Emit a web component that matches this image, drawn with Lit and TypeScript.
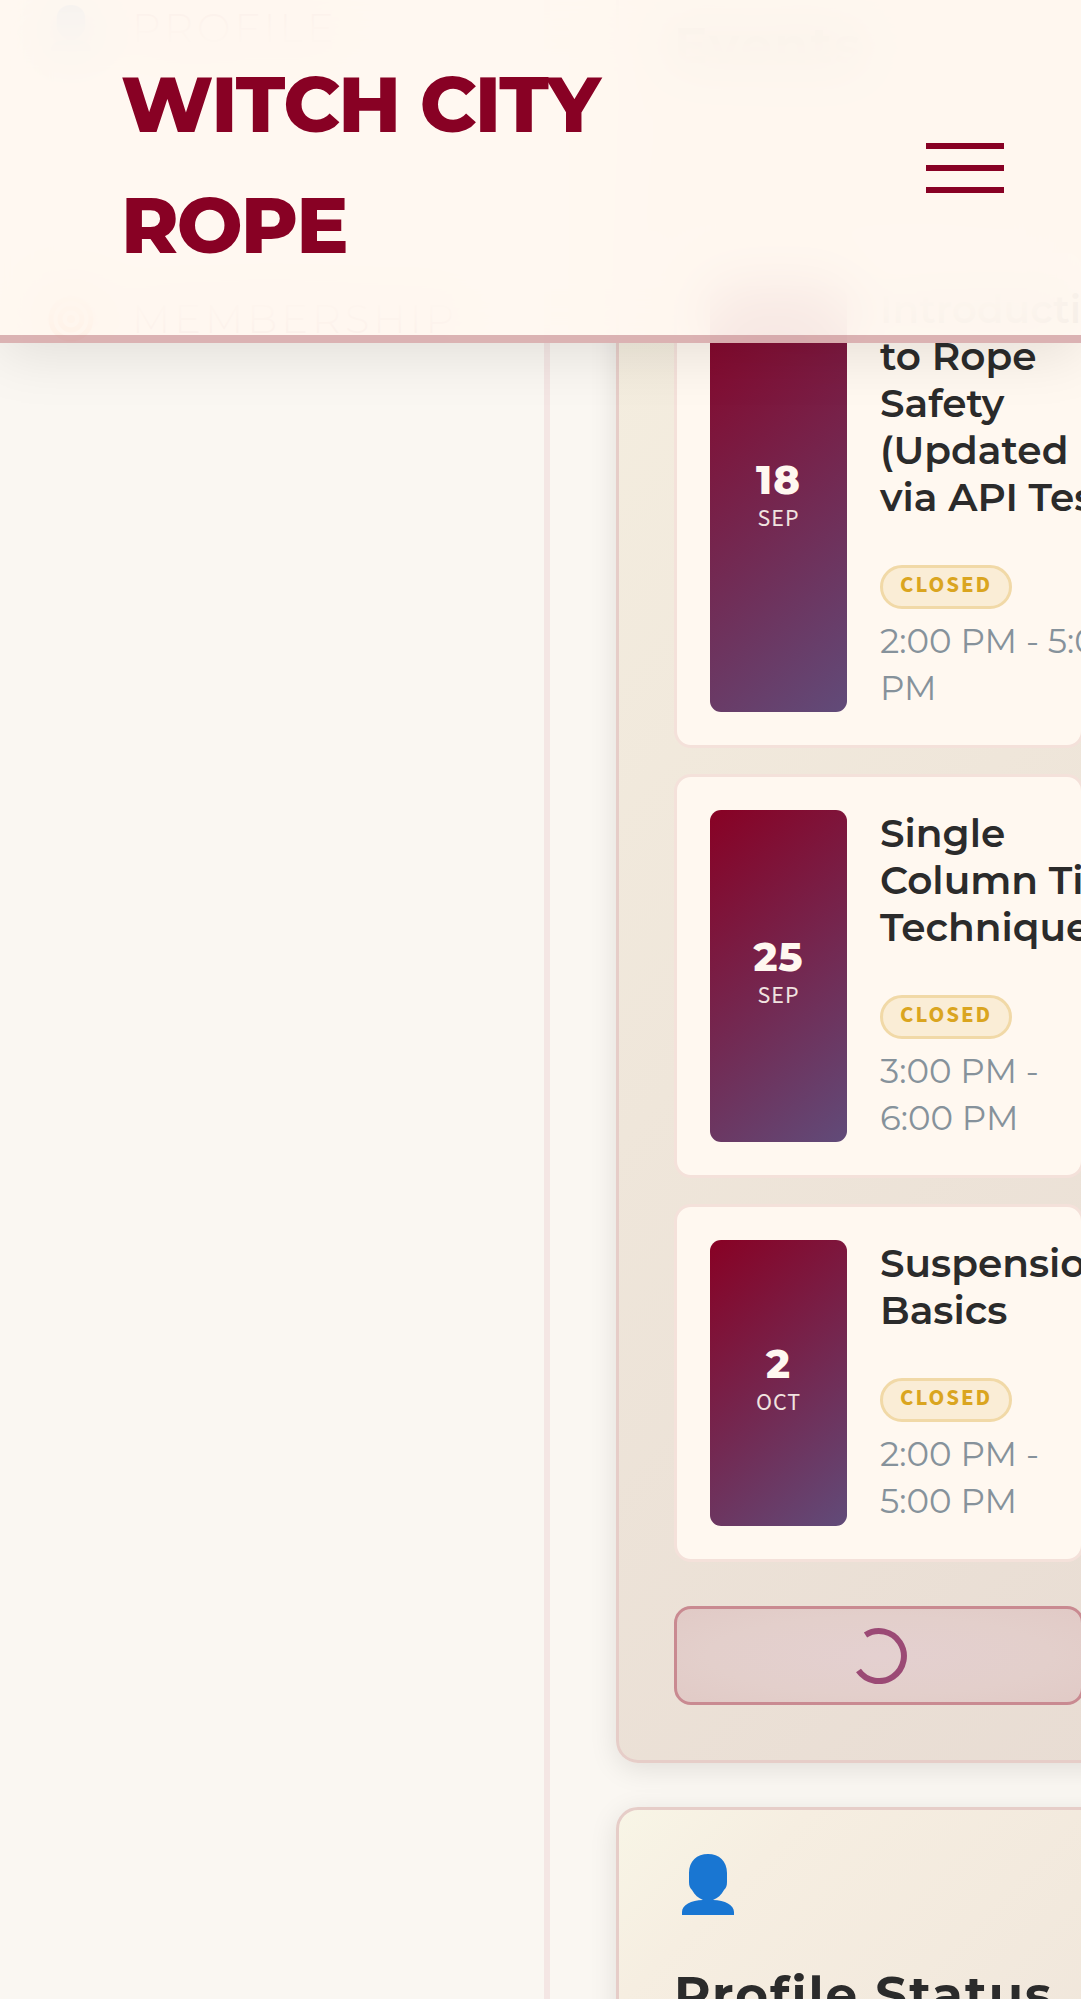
import { LitElement, html, css, svg } from "lit";
import { customElement, property } from "lit/decorators.js";

interface EventItem {
  day: string;
  month: string;
  title: string[];
  time: string[];
}

const EVENTS: EventItem[] = [
  {
    day: "18",
    month: "SEP",
    title: ["Introduction", "to Rope", "Safety", "(Updated", "via API Test)"],
    time: ["2:00 PM - 5:00", "PM"],
  },
  {
    day: "25",
    month: "SEP",
    title: ["Single", "Column Tie", "Techniques"],
    time: ["3:00 PM -", "6:00 PM"],
  },
  {
    day: "2",
    month: "OCT",
    title: ["Suspension", "Basics"],
    time: ["2:00 PM -", "5:00 PM"],
  },
];

const person = html`<svg class="person" viewBox="0 0 52 61" aria-hidden="true">
  ${svg`<path fill="#1976d2" d="M26 0C37 0 45 7 45 19V28C45 32 44 34 42 36C39 41 36 44 31 46C43 46 52 51 52 58V61H0V58C0 51 9 46 21 46C16 44 13 41 10 36C8 34 7 32 7 28V19C7 7 15 0 26 0Z"/>`}
</svg>`;

const target = html`<svg class="target" viewBox="0 0 46 46" aria-hidden="true">
  ${svg`<g fill="none" stroke="#e8590c" stroke-width="5"><circle cx="23" cy="23" r="20"/><circle cx="23" cy="23" r="11"/></g><circle cx="23" cy="23" r="4" fill="#e8590c"/>`}
</svg>`;

const lines = (items: string[]) =>
  items.map((text, i) => (i ? html`<br />${text}` : text));

@customElement("event-card")
export class EventCard extends LitElement {
  @property({ attribute: false }) event!: EventItem;

  static styles = css`
    :host {
      display: block;
    }
    .event {
      display: flex;
      gap: 33px;
      padding: 33px;
      border: 3px solid #f4e1da;
      border-radius: 17px;
      background: #fff8f0;
    }
    .date {
      flex: none;
      box-sizing: border-box;
      width: 137px;
      min-height: 286px;
      display: flex;
      flex-direction: column;
      align-items: center;
      justify-content: center;
      border-radius: 11px;
      background: linear-gradient(140deg, #880124, #614b79);
      color: #fff8f0;
    }
    .day {
      font: 800 40px/40px "Montserrat", "Inter", sans-serif;
      letter-spacing: 1px;
    }
    .month {
      font: 400 24px/38px "Source Sans 3", "Noto Sans CJK SC", sans-serif;
      letter-spacing: 1px;
      opacity: 0.9;
    }
    .info {
      width: 135px;
      white-space: nowrap;
    }
    .title {
      margin: 0 0 44px;
      font: 600 39px/47px "Montserrat", "Inter", sans-serif;
      color: #2b2b2b;
    }
    .badge {
      display: flex;
      align-items: center;
      box-sizing: border-box;
      width: max-content;
      height: 44px;
      margin-bottom: 9px;
      padding: 0 17px 4px;
      border: 3px solid #f1d9a7;
      border-radius: 22px;
      background: #faedd6;
      color: #daa520;
      font: 700 23px/36px "Source Sans 3", "Noto Sans CJK SC", sans-serif;
      letter-spacing: 2px;
    }
    .time {
      margin: 0;
      font: 400 34px/47px "Montserrat", "Inter", sans-serif;
      color: #86929b;
    }
  `;

  render() {
    const e = this.event;
    return html`<article class="event">
      <div class="date">
        <span class="day">${e.day}</span>
        <span class="month">${e.month}</span>
      </div>
      <div class="info">
        <h3 class="title">${lines(e.title)}</h3>
        <span class="badge">CLOSED</span>
        <p class="time">${lines(e.time)}</p>
      </div>
    </article>`;
  }
}

@customElement("app-root")
export class AppRoot extends LitElement {
  static styles = css`
    :host {
      display: block;
      height: 100vh;
      overflow: hidden;
      background: #faf7f2;
    }
    .header {
      position: fixed;
      inset: 0 0 auto 0;
      z-index: 2;
      display: flex;
      align-items: center;
      justify-content: space-between;
      padding: 44px 77px 57px 121px;
      box-shadow: 0 11px 55px rgba(0, 0, 0, 0.1);
    }
    .header::before {
      content: "";
      position: absolute;
      inset: 0;
      z-index: -1;
      background: rgba(255, 248, 240, 0.95);
      backdrop-filter: blur(28px);
      opacity: 0.99;
    }
    .header::after {
      content: "";
      position: absolute;
      inset: auto 0 0 0;
      height: 8px;
      background: rgba(183, 109, 117, 0.5);
    }
    .logo {
      max-width: 500px;
      font: 800 78px/121px "Montserrat", "Inter", sans-serif;
      font-kerning: none;
      letter-spacing: -2px;
      color: #880124;
      text-decoration: none;
    }
    .menu {
      display: flex;
      flex-direction: column;
      gap: 16px;
      width: 78px;
      padding: 6px 0 0;
      border: 0;
      background: none;
    }
    .bar {
      height: 6px;
      background: #880124;
    }
    .layout {
      display: flex;
      min-height: 100%;
    }
    .sidebar {
      flex: none;
      box-sizing: border-box;
      width: 550px;
      min-height: 100vh;
      padding: 0 46px;
      border-right: 6px solid #f4e6e4;
    }
    .nav {
      display: flex;
      flex-direction: column;
      gap: 235px;
    }
    .link {
      display: flex;
      align-items: center;
      gap: 36px;
      height: 56px;
      font: 300 40px/56px "Montserrat", "Inter", sans-serif;
      letter-spacing: 4px;
      color: #880124;
      text-decoration: none;
    }
    .link svg {
      width: 50px;
      height: 46px;
      margin: 0;
    }
    .main {
      flex: 1;
      display: flex;
      flex-direction: column;
      gap: 44px;
      padding-left: 66px;
    }
    .card {
      box-sizing: border-box;
      min-width: 526px;
      padding: 44px 55px 55px;
      border: 3px solid #e6cdc8;
      border-radius: 22px;
      background: linear-gradient(135deg, #f8f5e6, #f6eee1 24%, #e8dcd3 180%);
      box-shadow: 0 6px 28px rgba(0, 0, 0, 0.1);
    }
    .upcoming {
      padding-top: 10px;
      border-top: 0;
      border-radius: 0 0 22px 22px;
      background: linear-gradient(135deg, #f6f0e1, #e8dcd3);
    }
    .heading {
      margin: 0;
      font: 700 50px/72px "Montserrat", "Inter", sans-serif;
      letter-spacing: 2px;
      white-space: nowrap;
      color: #2b2b2b;
    }
    .events {
      display: flex;
      flex-direction: column;
      gap: 26px;
      margin: 168px 0 44px;
    }
    .more {
      display: flex;
      align-items: center;
      justify-content: center;
      box-sizing: border-box;
      width: 100%;
      height: 99px;
      padding: 0;
      border: 3px solid #c98a91;
      border-radius: 17px;
      background: radial-gradient(ellipse at center, #e4d0d0, #e3cfcb 60%, #e1cac6);
    }
    .spinner {
      width: 56px;
      height: 56px;
    }
    .person {
      display: block;
      width: 52px;
      height: 61px;
      margin: 0 8px 44px;
    }
  `;

  render() {
    return html`
      <header class="header">
        <a class="logo" href="#">WITCH CITY ROPE</a>
        <button class="menu" aria-label="Menu">
          <span class="bar"></span><span class="bar"></span><span class="bar"></span>
        </button>
      </header>
      <div class="layout">
        <aside class="sidebar">
          <nav class="nav">
            <a class="link" href="#profile">${person}PROFILE</a>
            <a class="link" href="#membership">${target}MEMBERSHIP</a>
          </nav>
        </aside>
        <main class="main">
          <section class="card upcoming">
            <h2 class="heading">Events</h2>
            <div class="events">
              ${EVENTS.map((e) => html`<event-card .event=${e}></event-card>`)}
            </div>
            <button class="more" aria-label="Loading" disabled>
              <svg class="spinner" viewBox="0 0 56 56" aria-hidden="true">
                <path d="M14.5 7A25 25 0 1 1 7.5 42.5" fill="none" stroke="#9b4a75" stroke-width="6" />
              </svg>
            </button>
          </section>
          <section class="card">
            ${person}
            <h2 class="heading">Profile Status</h2>
          </section>
        </main>
      </div>
    `;
  }
}
